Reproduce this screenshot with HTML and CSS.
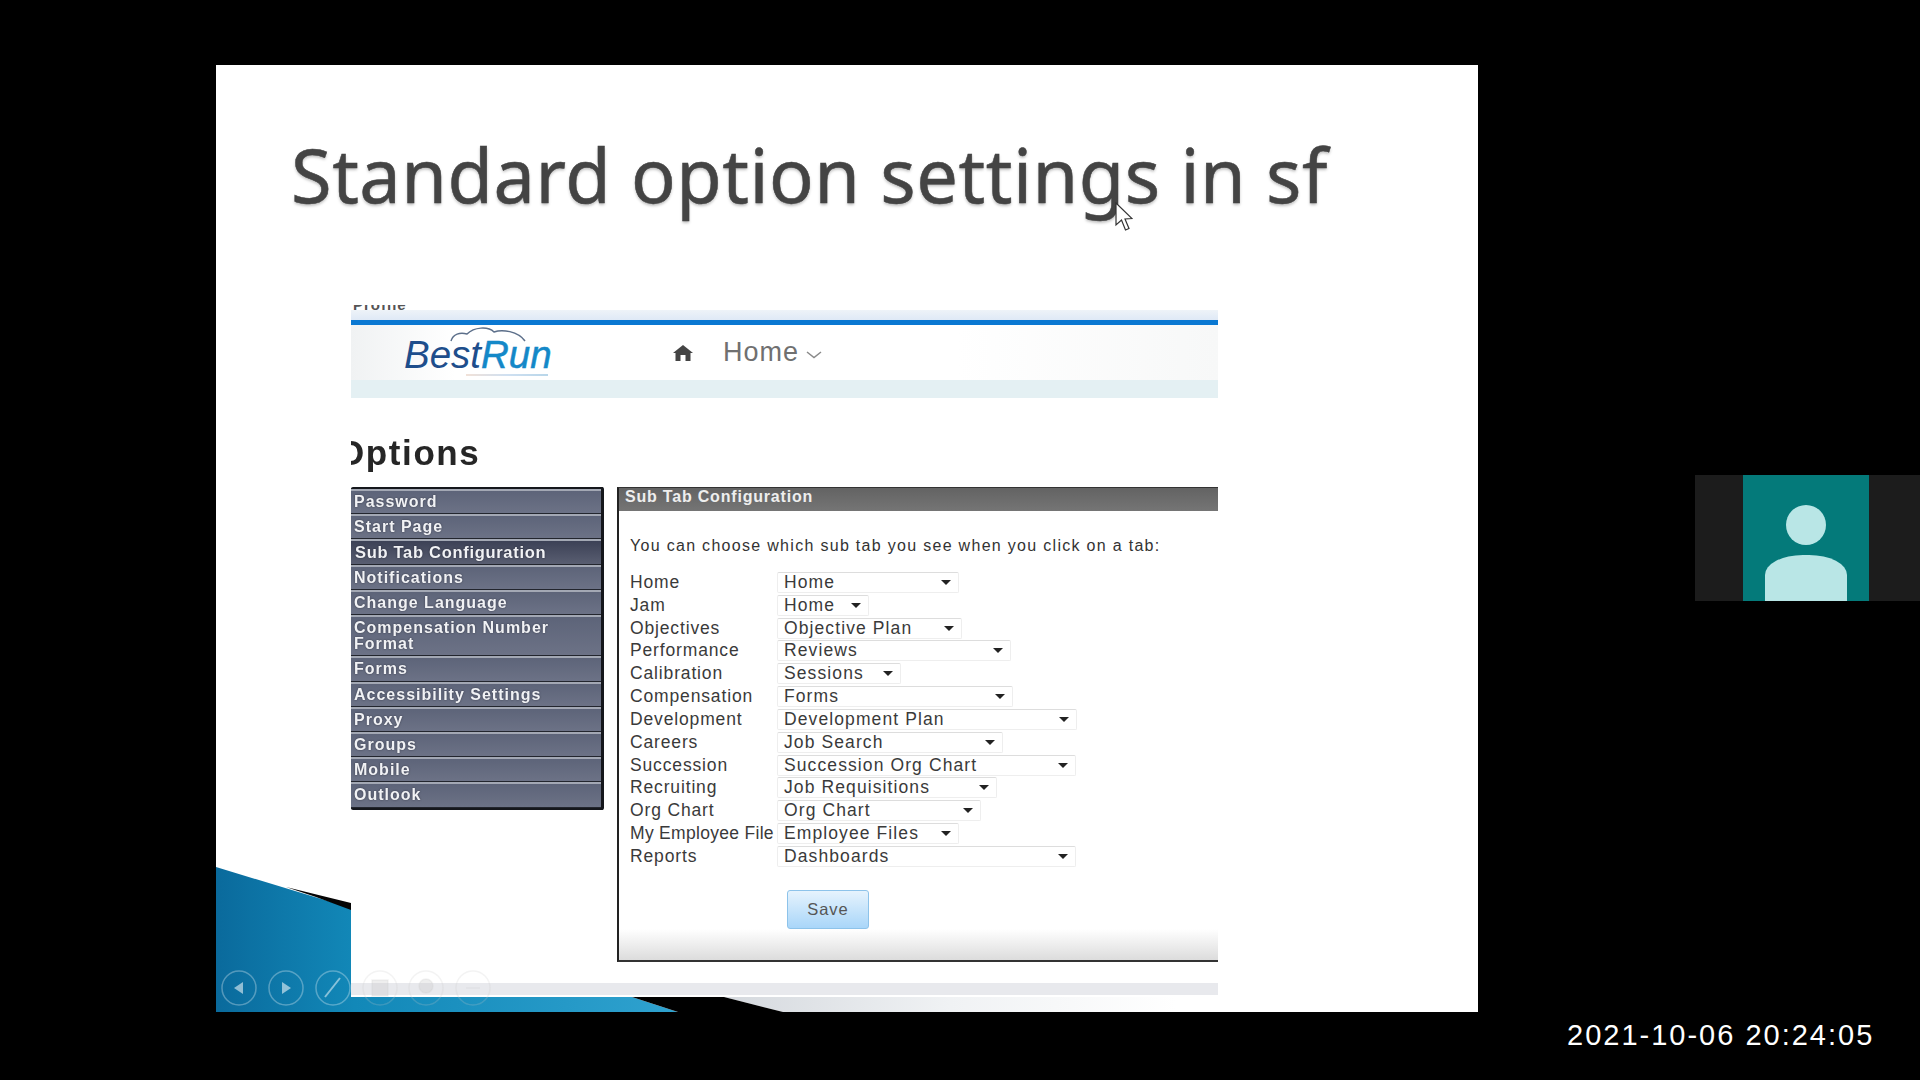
FILE: index.html
```html
<!DOCTYPE html>
<html lang="en">
<head>
    <meta charset="UTF-8">
    <title>Standard option settings in sf</title>
    <link rel="stylesheet" href="styles.css">
</head>
<body>
    <div class="slide">
        <svg class="decor" viewBox="0 0 1262 947" width="1262" height="947">
            <defs>
                <linearGradient id="blue" x1="0" y1="0" x2="1" y2="0">
                    <stop offset="0" stop-color="#0a6a9c"/>
                    <stop offset="0.3" stop-color="#1288b8"/>
                    <stop offset="1" stop-color="#2fa2cf"/>
                </linearGradient>
                <linearGradient id="pale" x1="0" y1="0" x2="1" y2="0">
                    <stop offset="0" stop-color="#d5d9de"/>
                    <stop offset="0.3" stop-color="#f0f2f4"/>
                    <stop offset="0.6" stop-color="#ffffff"/>
                </linearGradient>
            </defs>
            <polygon points="0,802 135,843 135,932 416,932 462,947 0,947" fill="url(#blue)"/>
            <polygon points="70,822 135,838 135,845 100,832" fill="#050505"/>
            <polygon points="508,932 1262,932 1262,947 567,947" fill="url(#pale)"/>
            <polygon points="416,932 508,932 567,947 462,947" fill="#000"/>
        </svg>

        <h1 class="slide-title">Standard option settings in sf</h1>

        <div class="shot">
            <div class="shot-top"><span class="clipped-link">Profile</span></div>
            <div class="brand-bar">
                <div class="logo">
                    <svg class="logo-cloud" viewBox="0 0 76 16" width="76" height="16">
                        <path d="M1 15 C3 8 10 6 17 8 C24 1 38 0 44 6 C52 3 68 5 75 15" fill="none" stroke="#5c6f8a" stroke-width="1.5"/>
                    </svg>
                    <span class="logo-best">Best</span><span class="logo-run">Run</span>
                    <div class="logo-tag"></div>
                </div>
                <svg class="home-icon" viewBox="0 0 22 18" width="22" height="18">
                    <path d="M11 1 L21 9 L18.5 9 L18.5 17 L13.5 17 L13.5 11 L8.5 11 L8.5 17 L3.5 17 L3.5 9 L1 9 Z" fill="#444"/>
                </svg>
                <span class="home-link">Home</span>
                <svg class="chevron" viewBox="0 0 16 8" width="16" height="8">
                    <path d="M1 1 L8 6.5 L15 1" fill="none" stroke="#8a8a8a" stroke-width="1.5"/>
                </svg>
            </div>
            <div class="sub-bar"></div>

            <div class="page-name"><h2>Options</h2></div>

            <div class="columns">
                <ul class="side-nav">
                    <li>Password</li>
                    <li>Start Page</li>
                    <li class="current">Sub Tab Configuration</li>
                    <li>Notifications</li>
                    <li>Change Language</li>
                    <li class="two-line">Compensation Number Format</li>
                    <li>Forms</li>
                    <li>Accessibility Settings</li>
                    <li>Proxy</li>
                    <li>Groups</li>
                    <li>Mobile</li>
                    <li>Outlook</li>
                </ul>

                <div class="panel">
                    <div class="panel-head">Sub Tab Configuration</div>
                    <p class="intro">You can choose which sub tab you see when you click on a tab:</p>
                    <div class="tab-form">
                        <span class="lbl">Home</span><div class="sel" style="width:182px">Home</div>
                        <span class="lbl">Jam</span><div class="sel" style="width:92px">Home</div>
                        <span class="lbl">Objectives</span><div class="sel" style="width:185px">Objective Plan</div>
                        <span class="lbl">Performance</span><div class="sel" style="width:234px">Reviews</div>
                        <span class="lbl">Calibration</span><div class="sel" style="width:124px">Sessions</div>
                        <span class="lbl">Compensation</span><div class="sel" style="width:236px">Forms</div>
                        <span class="lbl">Development</span><div class="sel" style="width:300px">Development Plan</div>
                        <span class="lbl">Careers</span><div class="sel" style="width:226px">Job Search</div>
                        <span class="lbl">Succession</span><div class="sel" style="width:299px">Succession Org Chart</div>
                        <span class="lbl">Recruiting</span><div class="sel" style="width:220px">Job Requisitions</div>
                        <span class="lbl">Org Chart</span><div class="sel" style="width:204px">Org Chart</div>
                        <span class="lbl tight">My Employee File</span><div class="sel" style="width:182px">Employee Files</div>
                        <span class="lbl">Reports</span><div class="sel" style="width:299px">Dashboards</div>
                    </div>
                    <button class="save-btn">Save</button>
                    <div class="panel-foot"></div>
                </div>
            </div>
            <div class="footer-band"></div>
        </div>

        <!-- slide show controls -->
        <svg class="controls" viewBox="0 0 300 44" width="300" height="44">
            <g fill="none" stroke="#ffffff" stroke-opacity="0.3" stroke-width="1.5">
                <circle cx="23" cy="22" r="17"/>
                <circle cx="70" cy="22" r="17"/>
                <circle cx="117" cy="22" r="17"/>
            </g>
            <g fill="none" stroke="#c8c8c8" stroke-opacity="0.22" stroke-width="1.5">
                <circle cx="164" cy="22" r="17"/>
                <circle cx="210" cy="22" r="17"/>
                <circle cx="257" cy="22" r="17"/>
                <rect x="156" y="14" width="16" height="16" fill="#c8c8c8" fill-opacity="0.3"/>
                <circle cx="210" cy="20" r="7" fill="#c8c8c8" fill-opacity="0.3"/>
                <path d="M250 22 H264"/>
            </g>
            <path d="M27 16 L18 22 L27 28 Z" fill="#fff" fill-opacity="0.55"/>
            <path d="M66 16 L75 22 L66 28 Z" fill="#fff" fill-opacity="0.55"/>
            <path d="M109 31 L124 12" stroke="#fff" stroke-opacity="0.5" stroke-width="2"/>
        </svg>
    </div>

    <svg class="pointer" viewBox="0 0 18 30" width="18" height="30">
        <path d="M1 1 L1 23 L6.5 18 L10.5 28 L14 26.5 L10 17 L17 16.5 Z" fill="#fff" stroke="#333" stroke-width="1.2"/>
    </svg>

    <div class="cam-tile">
        <div class="cam-face">
            <div class="cam-head"></div>
            <div class="cam-body"></div>
        </div>
    </div>

    <div class="stamp">2021-10-06 20:24:05</div>
</body>
</html>
```

FILE: styles.css
```css
html, body{margin:0; padding:0;}
body{position:relative; width:1920px; height:1080px; background:#000; overflow:hidden; font-family:"Liberation Sans", Arial, sans-serif; padding:65px 0 0 216px; box-sizing:border-box;}

/* the slide */
.slide{position:relative; width:1262px; height:947px; background:#fff; overflow:hidden; display:flex; flex-direction:column;}
.decor{position:absolute; left:0; top:0;}
.controls{position:absolute; left:0; top:901px;}
.slide-title{position:relative; height:240px; margin:0; padding:70px 0 0 75px; box-sizing:border-box; font-family:"Noto Sans", sans-serif; font-weight:normal; font-size:74px; line-height:80px; color:#444; letter-spacing:.5px; -webkit-text-stroke:.5px #444; text-shadow:0 2px 3px rgba(0,0,0,.25); white-space:nowrap; filter:blur(.6px);}

/* pasted screenshot */
.shot{position:relative; width:867px; margin-left:135px; filter:blur(.5px);}
.shot-top{height:15px; background:linear-gradient(#fff 33%, #eef3f8 34%, #dfe9f6); overflow:hidden;}
.clipped-link{display:block; margin:-8px 0 0 2px; font-size:15px; line-height:16px; font-weight:bold; color:#555; letter-spacing:1px;}
.brand-bar{display:flex; align-items:center; height:55px; border-top:5px solid #0a78d2; background:linear-gradient(90deg, #f0f2f3, #fff 12%, #fff 70%, #f7f8f8); padding-left:53px;}
.logo{position:relative; width:268px; font-size:38.5px; line-height:40px; font-style:italic; margin-top:4px;}
.logo-cloud{position:absolute; left:46px; top:-9px;}
.logo-best{color:#1e4e8c;}
.logo-run{color:#1488c8; -webkit-text-stroke:.5px #1488c8;}
.logo-tag{position:absolute; left:62px; top:39px; width:82px; height:2px; opacity:.55; background:linear-gradient(90deg, #e6c9b8, #a9c7e6, #7fb5d8);}
.home-icon{margin-right:29px;}
.home-link{font-size:27px; color:#707070; letter-spacing:1px;}
.chevron{margin:4px 0 0 7px;}
.sub-bar{height:18px; background:#e4f0f3;}
.page-name{height:89px; overflow:hidden;}
.page-name h2{margin:38px 0 0 -14px; font-size:35px; line-height:34px; font-weight:bold; color:#262626; letter-spacing:1.6px;}

.columns{display:flex; gap:13px; align-items:flex-start;}

/* left menu */
.side-nav{list-style:none; margin:0; padding:0; width:253px; box-sizing:border-box; border-top:2px solid #15171c; border-right:3px solid #15171c; border-bottom:2px solid #15171c; border-radius:2px; background:#15171c;}
.side-nav li{height:25.2px; box-sizing:border-box; padding-left:3px; border-top:2px solid #a3a8b4; border-bottom:1px solid #23262e; background:linear-gradient(#5d6479, #6c7286); color:#f1f2f5; font-size:16px; line-height:22px; font-weight:bold; letter-spacing:1px; text-shadow:0 0 2px rgba(20,20,30,.6); white-space:nowrap;}
.side-nav li.current{padding-left:4px; background:linear-gradient(#3c4156, #595e71); font-size:16.5px; letter-spacing:.7px;}
.side-nav li.two-line{height:41.5px; padding-right:30px; line-height:16px; padding-top:3px; white-space:normal;}

/* right panel */
.panel{position:relative; width:601px; height:475px; box-sizing:border-box; border-left:2px solid #222; border-top:1px solid #333; border-bottom:2px solid #333; background:#fff;}
.panel-head{height:23px; padding-left:6px; background:linear-gradient(#636363, #757575); color:#eee; font-size:16px; line-height:17px; font-weight:bold; letter-spacing:.8px;}
.intro{margin:25px 0 0 11px; font-size:16px; line-height:19px; color:#333; letter-spacing:1.3px; white-space:nowrap;}
.tab-form{display:grid; grid-template-columns:147px auto; grid-auto-rows:22.83px; justify-items:start; align-items:center; margin:16px 0 0 11px;}
.lbl{font-size:17.5px; color:#3a3a3a; letter-spacing:.85px; white-space:nowrap;}
.lbl.tight{letter-spacing:.3px;}
.sel{position:relative; height:21px; box-sizing:border-box; padding-left:6px; border:1px solid #eee; border-top-color:#ddd; border-radius:2px; background:#fff; font-size:17.5px; line-height:19px; color:#3a3a3a; letter-spacing:1.1px; white-space:nowrap;}
.sel::after{content:""; position:absolute; right:7px; top:7px; border-left:5px solid transparent; border-right:5px solid transparent; border-top:5px solid #222;}
.save-btn{display:block; width:82px; height:39px; margin:22px 0 0 168px; padding:0; border:1px solid #8dc3ea; border-radius:3px; background:linear-gradient(#e6f3fd, #a9d6f9); color:#555; font-family:"Liberation Sans", Arial, sans-serif; font-size:16.5px; letter-spacing:1px;}
.panel-foot{position:absolute; left:0; right:0; bottom:0; height:31px; background:linear-gradient(#fff, #dcdcdc);}
.footer-band{height:12px; margin-top:21px; background:#e8e9ed;}

/* things over the recording */
.pointer{position:absolute; left:1115px; top:202px;}
.cam-tile{position:absolute; left:1695px; top:475px; width:225px; height:126px; background:#1c1c1c; display:flex; padding-left:48px; box-sizing:border-box;}
.cam-face{width:126px; height:126px; background:#047a7a; display:flex; flex-direction:column; align-items:center; overflow:hidden;}
.cam-head{width:40px; height:40px; margin-top:30px; border-radius:50%; background:#b9e6e6;}
.cam-body{width:82px; height:46px; margin-top:10px; border-radius:38px 38px 0 0 / 20px 20px 0 0; background:#b9e6e6;}
.stamp{position:absolute; left:1567px; top:1018px; color:#fff; font-size:29px; line-height:34px; letter-spacing:2px; white-space:nowrap;}
```
